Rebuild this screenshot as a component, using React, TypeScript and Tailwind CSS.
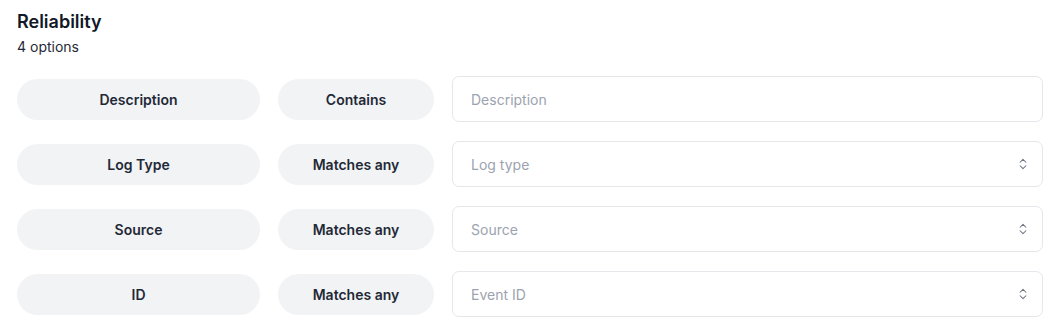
import { ChevronsUpDown } from 'lucide-react';

type Row = {
  field: string;
  op: string;
  placeholder: string;
  select: boolean;
};

const rows: Row[] = [
  { field: 'Description', op: 'Contains', placeholder: 'Description', select: false },
  { field: 'Log Type', op: 'Matches any', placeholder: 'Log type', select: true },
  { field: 'Source', op: 'Matches any', placeholder: 'Source', select: true },
  { field: 'ID', op: 'Matches any', placeholder: 'Event ID', select: true },
];

function Pill({ children, className }: { children: React.ReactNode; className: string }) {
  return (
    <div
      className={`h-[41px] rounded-full bg-[#f2f3f5] flex items-center justify-center text-[14px] font-semibold text-[#1f2937] shrink-0 ${className}`}
    >
      {children}
    </div>
  );
}

export default function App() {
  return (
    <div className="bg-white w-[1060px] h-[333px] px-[17px] pt-[8px] font-['Inter',sans-serif]">
      <h2 className="text-[18px] leading-7 font-semibold text-[#111827]">Reliability</h2>
      <p className="text-[14px] leading-5 text-[#1f2937] mt-[1px]">4 options</p>

      <div className="mt-[19px] flex flex-col gap-[19px]">
        {rows.map((row) => (
          <div key={row.field} className="flex items-center gap-[18px]">
            <Pill className="w-[243px]">{row.field}</Pill>
            <Pill className="w-[156px]">{row.op}</Pill>
            <div className="flex-1 h-[46px] rounded-[7px] border border-[#e5e7eb] flex items-center pl-[18px] pr-[12px]">
              <span className="flex-1 text-[14px] leading-5 text-[#9ca3af] pt-[1px]">{row.placeholder}</span>
              {row.select && <ChevronsUpDown size={14} strokeWidth={1.75} className="text-[#6b7280]" />}
            </div>
          </div>
        ))}
      </div>
    </div>
  );
}
